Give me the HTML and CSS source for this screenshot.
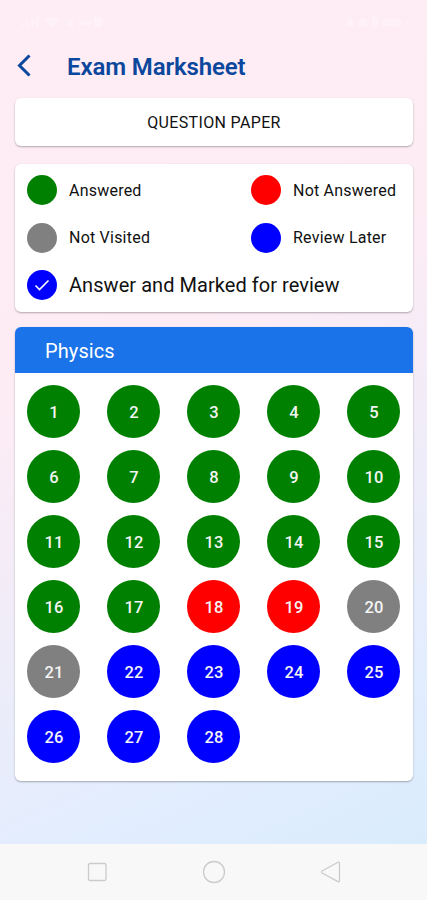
FILE: index.html
```html
<!DOCTYPE html>
<html lang="en">
<head>
    <meta charset="UTF-8">
    <meta name="viewport" content="width=device-width, initial-scale=1.0">
    <title>Exam Marksheet</title>
    <link rel="stylesheet" href="styles.css">
</head>
<body>
    <div class="screen">
        <div class="status-bar">
            <svg class="status-left" viewBox="0 0 86 16">
                <path d="M2 13h3v-2h-3zM7 13h3v-5h-3zM12 13h3v-8h-3zM17 13h3v-11h-3zM25 6q8 -6 16 0l-8 8zM46 10l8 -7v11zM60 7h12v4h-12zM75 3h8v10h-8z" />
            </svg>
            <svg class="status-right" viewBox="0 0 68 16">
                <path d="M2 12l5 -10l5 10zM16 4h8v8h-8zM29 3h6v10h-6zM40 5h18v7h-18zM63 7h3v3h-3z" />
            </svg>
        </div>

        <header class="app-bar">
            <svg class="back-icon" viewBox="0 0 16 24" fill="none" stroke="currentColor">
                <path stroke-width="3" d="M14.5 1.5L4.5 11.5L14.5 21.5" />
            </svg>
            <h1>Exam Marksheet</h1>
        </header>

        <button class="card paper-button">QUESTION PAPER</button>

        <section class="card legend">
            <div class="legend-item"><span class="dot answered"></span>Answered</div>
            <div class="legend-item"><span class="dot not-answered"></span>Not Answered</div>
            <div class="legend-item"><span class="dot not-visited"></span>Not Visited</div>
            <div class="legend-item"><span class="dot review"></span>Review Later</div>
            <div class="legend-item wide">
                <span class="dot review">
                    <svg viewBox="0 0 16 12" fill="none" stroke="currentColor">
                        <path stroke-width="1.6" d="M1.5 6.5L5.5 10.5L14.5 1.5" />
                    </svg>
                </span>
                Answer and Marked for review
            </div>
        </section>

        <section class="card subject">
            <h2>Physics</h2>
            <div class="questions">
                <span class="question answered">1</span>
                <span class="question answered">2</span>
                <span class="question answered">3</span>
                <span class="question answered">4</span>
                <span class="question answered">5</span>
                <span class="question answered">6</span>
                <span class="question answered">7</span>
                <span class="question answered">8</span>
                <span class="question answered">9</span>
                <span class="question answered">10</span>
                <span class="question answered">11</span>
                <span class="question answered">12</span>
                <span class="question answered">13</span>
                <span class="question answered">14</span>
                <span class="question answered">15</span>
                <span class="question answered">16</span>
                <span class="question answered">17</span>
                <span class="question not-answered">18</span>
                <span class="question not-answered">19</span>
                <span class="question not-visited">20</span>
                <span class="question not-visited">21</span>
                <span class="question review">22</span>
                <span class="question review">23</span>
                <span class="question review">24</span>
                <span class="question review">25</span>
                <span class="question review">26</span>
                <span class="question review">27</span>
                <span class="question review">28</span>
            </div>
        </section>
    </div>

    <nav class="nav-bar">
        <svg viewBox="0 0 24 24"><rect x="3.5" y="3.5" width="17.5" height="17" rx="1.5" /></svg>
        <svg viewBox="0 0 24 24"><circle cx="12" cy="12" r="10.5" /></svg>
        <svg viewBox="0 0 24 24"><path d="M19.5 2.5Q21.5 1.5 21.5 3.8V20.2Q21.5 22.5 19.5 21.4L4.5 13.2Q2.8 12 4.5 10.8Z" /></svg>
    </nav>
</body>
</html>
```

FILE: styles.css
```css
:root {
    --primary: #0b479d;
    --header: #1a73e8;
    --answered: #008000;
    --not-answered: #ff0000;
    --not-visited: #808080;
    --review: #0000ff;
}

* {
    box-sizing: border-box;
    margin: 0;
    padding: 0;
}

body {
    height: 900px;
    display: flex;
    flex-direction: column;
    font-family: Roboto, sans-serif;
    color: #111;
    overflow: hidden;
}

.screen {
    flex: 1;
    padding: 0 14px 0 15px;
    background: linear-gradient(155deg, #feedf4 0%, #feecf4 38%, #e2edfe 84%, #daecfc 100%);
}

.status-bar {
    height: 42px;
    padding: 14px 2px 0 4px;
    display: flex;
    justify-content: space-between;
    fill: rgba(255, 255, 255, 0.25);
}

.status-left {
    width: 86px;
    height: 16px;
}

.status-right {
    width: 68px;
    height: 16px;
}

.app-bar {
    height: 48px;
    display: flex;
    align-items: center;
}

.back-icon {
    width: 16px;
    height: 24px;
    color: var(--primary);
}

h1 {
    margin-left: 36px;
    padding-top: 1px;
    font-size: 24px;
    font-weight: 600;
    letter-spacing: -0.12px;
    color: var(--primary);
}

.card {
    background: #fff;
    border-radius: 6px;
    box-shadow: 0 1px 2px rgba(0, 0, 0, 0.3);
}

.paper-button {
    display: block;
    width: 100%;
    height: 48px;
    margin-top: 8px;
    border: none;
    font-family: inherit;
    font-size: 16px;
    letter-spacing: 0.35px;
    color: #111;
}

.legend {
    height: 148px;
    margin-top: 18px;
    padding: 11px 12px;
    display: grid;
    grid-template-columns: 224px 1fr;
    row-gap: 17.5px;
    align-content: start;
}

.legend-item {
    height: 30px;
    display: flex;
    align-items: center;
    gap: 12px;
    font-size: 16px;
    letter-spacing: 0.22px;
    white-space: nowrap;
}

.legend-item.wide {
    grid-column: 1 / 3;
    font-size: 20px;
    letter-spacing: 0.05px;
}

.dot {
    width: 30px;
    height: 30px;
    border-radius: 50%;
    display: flex;
    justify-content: center;
    align-items: center;
    color: #fff;
}

.dot svg {
    width: 16px;
    height: 12px;
}

.subject {
    height: 454px;
    margin-top: 15px;
    overflow: hidden;
}

h2 {
    height: 46px;
    padding-left: 30px;
    background: var(--header);
    color: #fff;
    font-size: 20px;
    font-weight: 400;
    line-height: 48px;
    letter-spacing: 0.1px;
}

.questions {
    padding: 12px 13px 0 12px;
    display: grid;
    grid-template-columns: repeat(5, 53px);
    justify-content: space-between;
    row-gap: 12px;
}

.question {
    height: 53px;
    padding: 2px 0 0 1px;
    border-radius: 50%;
    display: flex;
    justify-content: center;
    align-items: center;
    color: #f4f4f4;
    font-size: 16.5px;
    font-weight: 500;
}

.answered {
    background: var(--answered);
}

.not-answered {
    background: var(--not-answered);
}

.not-visited {
    background: var(--not-visited);
}

.review {
    background: var(--review);
}

.nav-bar {
    height: 56px;
    padding: 0 85px;
    display: flex;
    justify-content: space-between;
    align-items: center;
    background: #f8f8f8;
}

.nav-bar svg {
    width: 24px;
    height: 24px;
    fill: none;
    stroke: #cbcbcb;
    stroke-width: 1.3;
}
```
